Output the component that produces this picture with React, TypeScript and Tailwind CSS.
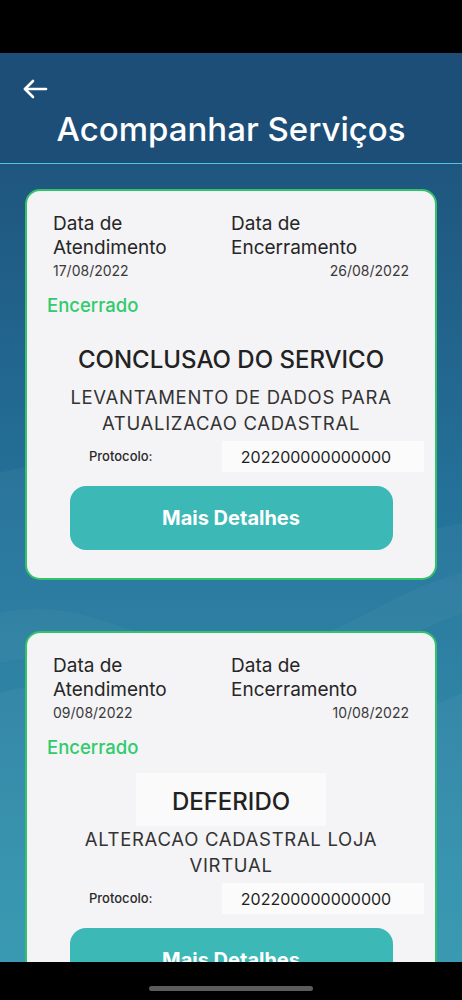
import React from 'react';

interface Servico {
  id: number;
  dataAtendimento: string;
  dataEncerramento: string;
  status: string;
  titulo: string;
  descricao: string;
  protocolo: string;
  destaqueTitulo?: boolean;
}

const servicos: Servico[] = [
  {
    id: 1,
    dataAtendimento: '17/08/2022',
    dataEncerramento: '26/08/2022',
    status: 'Encerrado',
    titulo: 'CONCLUSAO DO SERVICO',
    descricao: 'LEVANTAMENTO DE DADOS PARA ATUALIZACAO CADASTRAL',
    protocolo: '202200000000000',
  },
  {
    id: 2,
    dataAtendimento: '09/08/2022',
    dataEncerramento: '10/08/2022',
    status: 'Encerrado',
    titulo: 'DEFERIDO',
    descricao: 'ALTERACAO CADASTRAL LOJA VIRTUAL',
    protocolo: '202200000000000',
    destaqueTitulo: true,
  },
];

function ServicoCard({ servico }: { servico: Servico }) {
  return (
    <div className="rounded-[15px] border-2 border-[#33c26a] bg-[#f4f3f6] pt-[21px] pb-[28px] text-[#262626]">
      {/* datas */}
      <div className="grid grid-cols-2 px-[26px]">
        <div>
          <div className="text-[19px] leading-[24px]">Data de</div>
          <div className="text-[19px] leading-[24px]">Atendimento</div>
          <div className="text-[14px] leading-[20px] text-[#3a3a3a] mt-[1px]">{servico.dataAtendimento}</div>
        </div>
        <div>
          <div className="text-[19px] leading-[24px]">Data de</div>
          <div className="text-[19px] leading-[24px]">Encerramento</div>
          <div className="text-[14px] leading-[20px] text-[#3a3a3a] mt-[1px] text-right">{servico.dataEncerramento}</div>
        </div>
      </div>

      {/* status */}
      <div className="mt-[12px] px-[20px] text-[18.5px] leading-[24px] font-medium text-[#2ecc6b]">{servico.status}</div>

      {/* titulo */}
      <div className="mt-[14px] flex justify-center">
        <div
          className={`h-[53px] pt-[4px] flex items-center px-[36px] text-[24px] font-medium text-[#222] ${
            servico.destaqueTitulo ? 'bg-[#fafafb]' : ''
          }`}
        >
          {servico.titulo}
        </div>
      </div>

      {/* descricao */}
      <div className="mx-auto w-[360px] text-center text-[18.5px] leading-[26px] tracking-[0.7px] text-[#333]">
        {servico.descricao}
      </div>

      {/* protocolo */}
      <div className="mt-[5px] flex items-center pr-[11px]">
        <div className="w-[195px] pl-[62px] text-[13px] font-medium text-[#2a2a2a]">Protocolo:</div>
        <div className="flex-1 h-[31px] flex items-center justify-center bg-[#fbfbfc] text-[16px] text-[#1f1f1f] pr-[14px]">
          {servico.protocolo}
        </div>
      </div>

      {/* botao */}
      <div className="mt-[14px] flex justify-center">
        <button className="w-[323px] h-[64px] rounded-[16px] bg-[#3cb8b6] text-white text-[20px] font-bold">
          Mais Detalhes
        </button>
      </div>
    </div>
  );
}

export default function App() {
  return (
    <div
      className="w-[462px] h-[1000px] flex flex-col bg-black overflow-hidden"
      style={{ fontFamily: 'Inter, "Noto Sans", sans-serif' }}
    >
      <div className="h-[53px] bg-black shrink-0" />

      <div className="relative flex-1 overflow-hidden bg-gradient-to-b from-[#1d4d76] via-[#24729a] to-[#2b93ad]">
        {/* ondas de fundo */}
        <svg className="absolute inset-0 w-full h-full" viewBox="0 0 462 909" preserveAspectRatio="none">
          <path d="M0 420 C120 380 260 520 462 470 L462 909 L0 909 Z" fill="#ffffff" opacity="0.035" />
          <path d="M0 640 C140 600 300 720 462 640 L462 909 L0 909 Z" fill="#ffffff" opacity="0.04" />
          <path d="M0 560 C90 540 150 600 230 600 C330 600 380 540 462 520 L462 560 C380 590 330 640 230 640 C150 640 90 590 0 610 Z" fill="#ffffff" opacity="0.03" />
        </svg>

        <div className="relative">
          {/* header */}
          <div className="h-[111px] bg-[#1d4e77] border-b border-[#4fc4df] flex flex-col">
            <div className="pl-[22px] pt-[25px] h-[46px]">
              <svg width="26" height="22" viewBox="0 0 26 22" fill="none" stroke="white" strokeWidth="2.6" strokeLinecap="round" strokeLinejoin="round">
                <path d="M24 11H3" />
                <path d="M11 3L3 11L11 19" />
              </svg>
            </div>
            <h1 className="text-center text-white text-[33px] leading-[40px] font-medium mt-[10px]">
              Acompanhar Serviços
            </h1>
          </div>

          {/* lista */}
          <div className="px-[25px] pt-[25px] flex flex-col gap-[51px]">
            {servicos.map((s) => (
              <ServicoCard key={s.id} servico={s} />
            ))}
          </div>
        </div>
      </div>

      <div className="h-[38px] bg-black shrink-0 flex justify-center items-center">
        <div className="w-[164px] h-[5px] rounded-full bg-[#5c5c5c] mt-[14px]" />
      </div>
    </div>
  );
}
